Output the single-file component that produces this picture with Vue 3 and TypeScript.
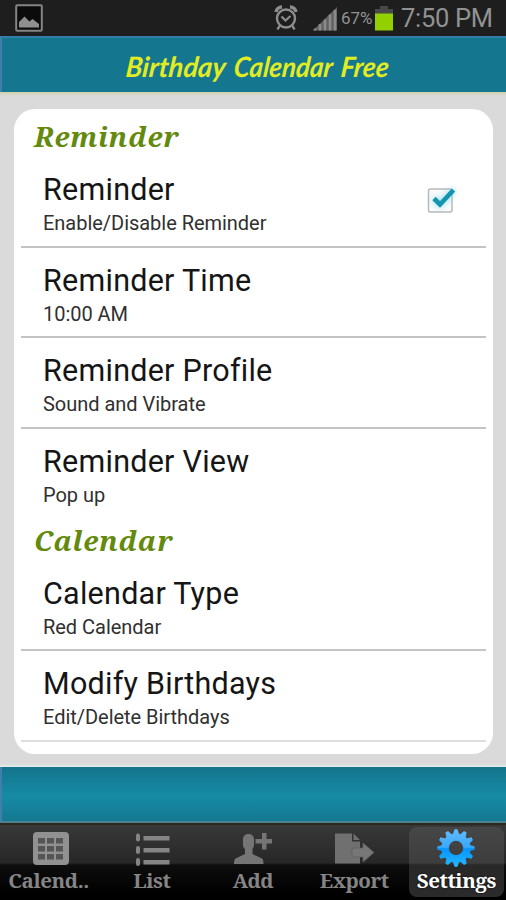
<script setup lang="ts">
interface Item { title: string; sub: string; check?: boolean; last?: boolean; faint?: boolean }
interface Section { name: string; items: Item[] }
interface Tab { label: string; icon: string; active?: boolean }

const sections: Section[] = [
  {
    name: 'Reminder',
    items: [
      { title: 'Reminder', sub: 'Enable/Disable Reminder', check: true },
      { title: 'Reminder Time', sub: '10:00 AM' },
      { title: 'Reminder Profile', sub: 'Sound and Vibrate' },
      { title: 'Reminder View', sub: 'Pop up', last: true },
    ],
  },
  {
    name: 'Calendar',
    items: [
      { title: 'Calendar Type', sub: 'Red Calendar' },
      { title: 'Modify Birthdays', sub: 'Edit/Delete Birthdays', faint: true },
    ],
  },
]

const tabs: Tab[] = [
  { label: 'Calend..', icon: 'calendar' },
  { label: 'List', icon: 'list' },
  { label: 'Add', icon: 'add' },
  { label: 'Export', icon: 'export' },
  { label: 'Settings', icon: 'settings', active: true },
]

const teeth = Array.from({ length: 12 }, (_, i) => i * 30)
const cells = [0, 1, 2].flatMap((r) => [0, 1, 2].map((c) => ({ x: 6 + c * 9, y: 6 + r * 8 })))
</script>

<template>
  <div class="screen">
    <header class="status">
      <svg class="pic" width="28" height="28" viewBox="0 0 28 28">
        <rect x="1.2" y="1.2" width="25.6" height="25.6" rx="1" fill="#0b0b0b" stroke="#858585" stroke-width="2" />
        <path d="M4 23.500V18l5.500-5.500 5 5 3-2.500 6.500 5v3.500z" fill="#8f8f8f" />
      </svg>
      <svg class="alarm" width="24" height="26" viewBox="0 0 24 26" fill="none" stroke="#8d8d8d">
        <circle cx="12" cy="13.500" r="9" stroke-width="2.400" />
        <path d="M7.500 11.500l4 4 5-4.500" stroke-width="2.200" />
        <path d="M2 7a6 6 0 0 1 6-5M22 7a6 6 0 0 0-6-5" stroke-width="3.500" />
        <path d="M5.500 21l-2 3.500M18.500 21l2 3.500" stroke-width="2.500" />
      </svg>
      <svg class="signal" width="24" height="24" viewBox="0 0 24 24">
        <path d="M0 23.500L24 0v23.500z" fill="#626262" />
        <path d="M2 23.500v-2M7 23.500V17M12 23.500V12.500M17 23.500V7.500M22 23.500V3" stroke="#8b8b8b" stroke-width="2.500" />
      </svg>
      <span class="percent">67%</span>
      <svg class="battery" width="18" height="25" viewBox="0 0 18 25">
        <path d="M5 0h8v3h5v5H0V3h5z" fill="#484848" />
        <rect y="7.500" width="18" height="17" fill="#93d000" />
      </svg>
      <span class="clock">7:50 PM</span>
    </header>

    <div class="heading">
      <svg width="506" height="54" viewBox="0 0 506 54">
        <g transform="translate(0 39) skewX(-6)">
          <text class="brand" x="125" y="0" textLength="100" lengthAdjust="spacingAndGlyphs">Birthday</text>
          <text class="brand" x="233" y="0" textLength="99" lengthAdjust="spacingAndGlyphs">Calendar</text>
          <text class="brand" x="340" y="0" textLength="48" lengthAdjust="spacingAndGlyphs">Free</text>
        </g>
      </svg>
    </div>

    <main class="body">
      <div class="card">
        <section v-for="s in sections" :key="s.name">
          <h2>{{ s.name }}</h2>
          <div v-for="i in s.items" :key="i.title" class="row" :class="{ last: i.last, faint: i.faint }">
            <div class="texts">
              <div class="title">{{ i.title }}</div>
              <div class="sub">{{ i.sub }}</div>
            </div>
            <svg v-if="i.check" class="check" width="30" height="30" viewBox="0 0 30 30">
              <rect x="1.500" y="4" width="23.500" height="23" rx="2" fill="#fbfbfb" stroke="#b9b9b9" stroke-width="1.500" />
              <path class="glow" d="M7 13.500l6 6L26.500 5" fill="none" stroke="#1295b0" stroke-width="4.600" />
            </svg>
          </div>
        </section>
      </div>
    </main>

    <div class="band"></div>

    <nav class="tabs">
      <div v-for="t in tabs" :key="t.label" class="tab" :class="{ active: t.active }">
        <svg v-if="t.icon === 'calendar'" width="38" height="38" viewBox="0 0 38 38">
          <rect x="1" y="3" width="36" height="33" rx="4" fill="#919191" />
          <rect v-for="(c, n) in cells" :key="n" :x="c.x" :y="c.y + 3" width="7" height="5.500" fill="#555" />
        </svg>
        <svg v-else-if="t.icon === 'list'" width="38" height="38" viewBox="0 0 38 38">
          <g fill="#858585">
            <rect x="3" y="4.500" width="4" height="8" rx="2" /><rect x="3" y="17" width="4" height="8" rx="2" /><rect x="3" y="29" width="4" height="8" rx="2" />
            <rect x="10.500" y="7" width="26" height="4.500" /><rect x="10.500" y="19" width="26" height="4.500" /><rect x="10.500" y="31" width="26" height="4.500" />
          </g>
        </svg>
        <svg v-else-if="t.icon === 'add'" width="38" height="38" viewBox="0 0 38 38" fill="#757575">
          <path d="M9 11c0-4 2-6 5.500-6S20 7 20 11v5c0 2-1 3-1.500 4v5L28 29.500q1.500 1 1.500 5.500H0q0-4.500 1.500-5.500L11 25v-5c-1-1-2-2-2-4z" />
          <path d="M28 4h4.500v6H39v4.500h-6.500v6H28v-6h-6.500V10H28z" />
        </svg>
        <svg v-else-if="t.icon === 'export'" width="40" height="38" viewBox="0 0 40 38">
          <path d="M1 4.500h17v8h8v22H1zM19.500 4.500l6.500 6.500h-6.500z" fill="#707070" />
          <path d="M20 19h9v-5L40 23.500 29 33v-5h-9q-2 0-2-2v-5q0-2 2-2z" fill="#777" stroke="#606060" stroke-width=".8" />
        </svg>
        <svg v-else width="38" height="38" viewBox="0 0 38 38">
          <defs>
            <linearGradient id="blue" gradientUnits="userSpaceOnUse" x1="0" y1="0" x2="0" y2="38">
              <stop offset="0" stop-color="#63bafc" /><stop offset=".48" stop-color="#38a9fc" />
              <stop offset=".52" stop-color="#0695ff" /><stop offset="1" stop-color="#24b9ff" />
            </linearGradient>
            <mask id="cog">
              <g fill="#fff">
                <circle cx="19" cy="19" r="14.500" />
                <path v-for="a in teeth" :key="a" d="M15.700 6L17.500 .3h3l1.800 5.700z" :transform="`rotate(${a} 19 19)`" />
              </g>
              <circle cx="19" cy="19" r="7.200" fill="#000" />
            </mask>
          </defs>
          <rect width="38" height="38" fill="url(#blue)" mask="url(#cog)" />
        </svg>
        <span class="label">{{ t.label }}</span>
      </div>
    </nav>
  </div>
</template>

<style>
body { margin: 0; }
</style>

<style scoped>
.screen { width: 506px; height: 900px; display: flex; flex-direction: column; overflow: hidden; background: #dadada; font-family: Roboto, sans-serif; }
.status { height: 36px; flex: none; display: flex; align-items: flex-start; background: #1e1e1e; color: #929292; }
.pic { margin: 4px 0 0 15px; }
.alarm { margin: 5px 0 0 231px; }
.signal { margin: 7px 0 0 15px; }
.percent { margin: 8px 0 0 4px; width: 33px; font-size: 17px; line-height: 20px; white-space: nowrap; }
.battery { margin: 6px 0 0 1px; }
.clock { margin: 3px 0 0 8px; font-size: 25.500px; line-height: 30px; letter-spacing: -.3px; white-space: nowrap; }
.heading { box-sizing: border-box; height: 56px; flex: none; background: #14778f; border-top: 2px solid #347fa9; border-left: 2px solid #3f7fae; overflow: hidden; }
.heading svg { display: block; margin-left: -2px; }
.brand { font-family: Lato, sans-serif; font-size: 28px; font-weight: 700; font-style: italic; fill: #e2ec20; }
.body { box-sizing: border-box; height: 675px; flex: none; padding: 17px 14px 0; background: linear-gradient(#d0d1ad, #dadada 4px, #dadada 672px, #e7eeee); }
.card { box-sizing: border-box; height: 645px; width: 479px; padding: 7px 7px 0; border-radius: 21px; background: #fff; overflow: hidden; }
h2 { margin: 0; height: 41px; padding-left: 13px; font: italic bold 28px/40px "Noto Serif", "DejaVu Serif Condensed", "DejaVu Serif", serif; letter-spacing: .7px; color: #63890d; }
.row { box-sizing: border-box; height: 90.700px; display: flex; justify-content: space-between; padding: 14px 29px 0 22px; border-bottom: 2px solid #c4c4c4; }
.row.last { border-bottom-color: transparent; }
.row.faint { border-bottom-color: #dedede; }
.title { font-size: 30.500px; line-height: 37px; letter-spacing: .25px; color: #151515; }
.sub { margin-top: 3px; font-size: 20px; line-height: 24px; letter-spacing: -.03px; color: #303030; }
.check { margin-top: 14px; }
.glow { filter: drop-shadow(0 0 3px #7fd8ea); }
.band { box-sizing: border-box; height: 56px; flex: none; border-left: 2px solid #3f7fae; border-bottom: 2px solid #4b8290; background: linear-gradient(#14748c, #178ba5 54%, #147890); }
.tabs { box-sizing: border-box; height: 77px; flex: none; display: grid; grid-template-columns: repeat(5, 1fr); padding-top: 2px; border-top: 2px solid #2d271c; background: linear-gradient(#383838, #272727 38px, #0d0d0d 40px, #000 70px); }
.tab { display: flex; flex-direction: column; align-items: center; height: 70px; }
.tab.active { margin: 0 2px 0 4px; border-radius: 8px; background: linear-gradient(#474747, #3d3d3d 36px, #282828 38px, #2b2b2b); }
.tab svg { flex: none; margin-top: 2px; }
.label { margin-top: 1px; font: bold 20.500px/24px "Noto Serif", "DejaVu Serif Condensed", "DejaVu Serif", serif; letter-spacing: -.4px; color: #858585; white-space: nowrap; }
.tab:first-child .label { margin-right: 4px; }
.active .label { color: #fff; text-shadow: 0 0 2px #000; }
</style>
